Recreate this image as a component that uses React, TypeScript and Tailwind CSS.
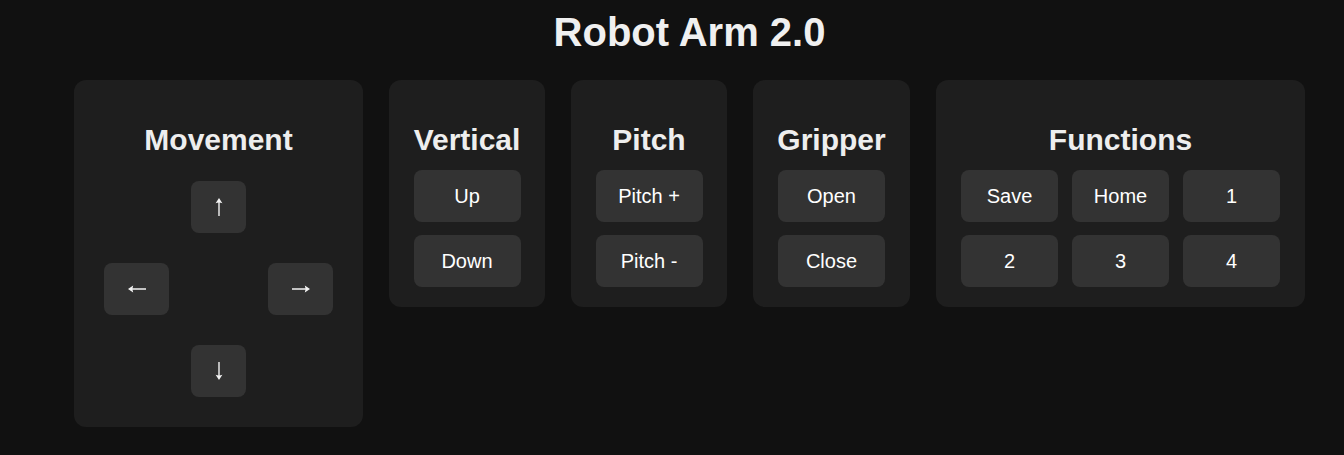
import React from 'react';

const font = { fontFamily: '"Liberation Sans", Arial, sans-serif' };

const btn =
  "h-[52px] rounded-[8px] bg-[#333333] text-white text-[20px] leading-[23px] flex items-center justify-center";

type Dir = "up" | "down" | "left" | "right";

const rotation: Record<Dir, string> = {
  up: "rotate-0",
  right: "rotate-90",
  down: "rotate-180",
  left: "-rotate-90",
};

// thin arrow with a small pointed head, drawn pointing up and rotated
const Arrow: React.FC<{ dir: Dir }> = ({ dir }) => (
  <svg viewBox="0 0 20 20" className={`w-[20px] h-[20px] ${rotation[dir]}`} fill="none">
    <path d="M10 3.5V19" stroke="#f4f4f4" strokeWidth="1.4" />
    <path d="M10 1L13.4 6.2Q10 4.6 6.6 6.2Z" fill="#f4f4f4" />
  </svg>
);

interface PanelProps {
  title: string;
  className?: string;
  children: React.ReactNode;
}

const Panel: React.FC<PanelProps> = ({ title, className = "", children }) => (
  <section className={`bg-[#1e1e1e] rounded-[12px] pt-[43px] flex flex-col items-center ${className}`}>
    <h2 className="text-[30px] leading-[34px] font-bold text-[#eeeeee]">{title}</h2>
    {children}
  </section>
);

const ButtonStack: React.FC<{ labels: string[] }> = ({ labels }) => (
  <div className="mt-[13px] flex flex-col gap-[13px]">
    {labels.map((label) => (
      <button key={label} className={`${btn} w-[107px]`}>
        {label}
      </button>
    ))}
  </div>
);

const App: React.FC = () => {
  const functions = ["Save", "Home", "1", "2", "3", "4"];

  return (
    <div className="min-h-screen bg-[#111111] pl-[35px] pt-[9px]" style={font}>
      <h1 className="text-center text-[40px] leading-[46px] font-bold text-[#f0f0f0]">Robot Arm 2.0</h1>

      <div className="mt-[25px] flex justify-center items-start gap-[26px]">
        <Panel title="Movement" className="w-[289px] pb-[30px]">
          <div className="mt-[24px] w-full px-[30px] flex flex-col gap-[30px]">
            <div className="flex justify-center">
              <button className={`${btn} w-[55px]`} aria-label="up">
                <Arrow dir="up" />
              </button>
            </div>
            <div className="flex justify-between">
              <button className={`${btn} w-[65px]`} aria-label="left">
                <Arrow dir="left" />
              </button>
              <button className={`${btn} w-[65px]`} aria-label="right">
                <Arrow dir="right" />
              </button>
            </div>
            <div className="flex justify-center">
              <button className={`${btn} w-[55px]`} aria-label="down">
                <Arrow dir="down" />
              </button>
            </div>
          </div>
        </Panel>

        <Panel title="Vertical" className="w-[156px] pb-[20px]">
          <ButtonStack labels={["Up", "Down"]} />
        </Panel>

        <Panel title="Pitch" className="w-[156px] pb-[20px]">
          <ButtonStack labels={["Pitch +", "Pitch -"]} />
        </Panel>

        <Panel title="Gripper" className="w-[157px] pb-[20px]">
          <ButtonStack labels={["Open", "Close"]} />
        </Panel>

        <Panel title="Functions" className="w-[369px] pb-[20px]">
          <div className="mt-[13px] grid grid-cols-3 gap-x-[14px] gap-y-[13px]">
            {functions.map((label) => (
              <button key={label} className={`${btn} w-[97px]`}>
                {label}
              </button>
            ))}
          </div>
        </Panel>
      </div>
    </div>
  );
};

export default App;
